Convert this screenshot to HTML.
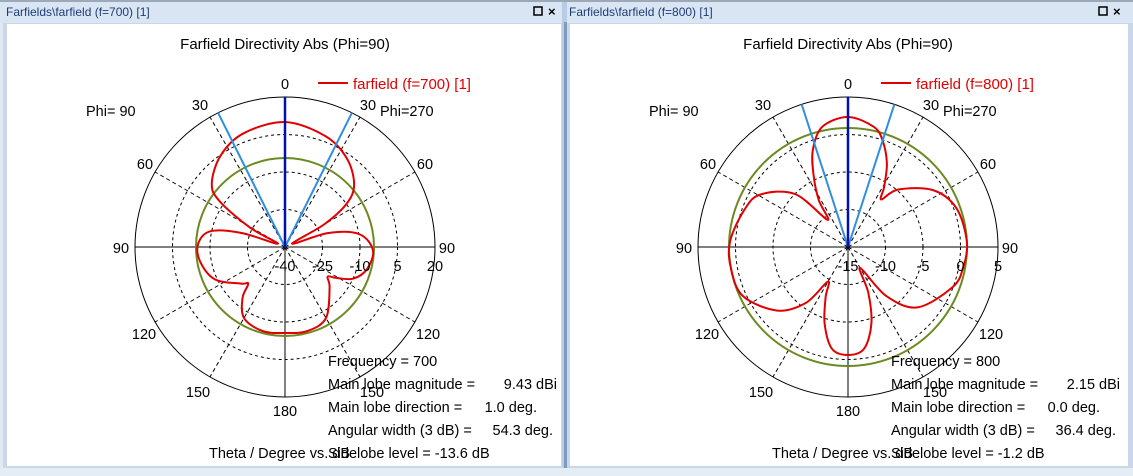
<!DOCTYPE html>
<html><head><meta charset="utf-8"><style>
html,body{margin:0;padding:0;background:#fff;}
svg{display:block;font-family:"Liberation Sans",sans-serif;}
</style></head><body>
<svg id="s" width="1133" height="476" viewBox="0 0 1133 476" xmlns="http://www.w3.org/2000/svg">
<rect x="0" y="0" width="1133" height="476" fill="#dfe8f3"/>
<rect x="0" y="0" width="1133" height="2" fill="#9aa8b8"/>
<rect x="0" y="2" width="564" height="21" fill="#d9e5f3"/>
<rect x="566" y="2" width="567" height="21" fill="#d9e5f3"/>
<rect x="562" y="2" width="5" height="474" fill="#b9cce3"/>
<rect x="564" y="22" width="3" height="446" fill="#7f9cc0"/>
<text x="6" y="16" font-size="12" fill="#1e3c78">Farfields\farfield (f=700) [1]</text>
<text x="569" y="16" font-size="12" fill="#1e3c78">Farfields\farfield (f=800) [1]</text>
<rect x="534" y="7" width="8" height="8" fill="none" stroke="#000" stroke-width="1.5"/>
<text x="548" y="16" font-size="13" font-weight="bold">×</text>
<rect x="1099" y="7" width="8" height="8" fill="none" stroke="#000" stroke-width="1.5"/>
<text x="1113" y="16" font-size="13" font-weight="bold">×</text>
<rect x="3" y="23" width="559" height="445" fill="#c9d7e8"/>
<rect x="7" y="24" width="554" height="442" fill="#fff"/>
<rect x="567" y="23" width="566" height="445" fill="#c9d7e8"/>
<rect x="570" y="24" width="558" height="442" fill="#fff"/>
<rect x="0" y="468" width="1133" height="8" fill="#e4ecf5"/>
<g id="p1"></g><g id="p2"></g>
</svg>
<script>
var NS="http://www.w3.org/2000/svg";
function el(p,n,a,t){var e=document.createElementNS(NS,n);for(var k in a)e.setAttribute(k,a[k]);if(t!==undefined)e.textContent=t;p.appendChild(e);return e;}
function pt(cx,cy,r,th){var a=th*Math.PI/180;return [cx+r*Math.sin(a),cy-r*Math.cos(a)];}
function panel(g,cx,cy,o){
  var R=150,FS=14.5;
  el(g,"text",{x:cx,y:49,"font-size":15,"text-anchor":"middle"},o.title);
  [37.5,75,112.5].forEach(function(r){el(g,"circle",{cx:cx,cy:cy,r:r,fill:"none",stroke:"#000","stroke-width":1,"stroke-dasharray":"3,3"});});
  el(g,"circle",{cx:cx,cy:cy,r:R,fill:"none",stroke:"#000","stroke-width":1});
  [30,60,120,150,210,240,300,330].forEach(function(t){var p=pt(cx,cy,R,t);el(g,"line",{x1:cx,y1:cy,x2:p[0],y2:p[1],stroke:"#000","stroke-dasharray":"4,3"});});
  el(g,"line",{x1:cx-R,y1:cy,x2:cx+R,y2:cy,stroke:"#000"});
  el(g,"line",{x1:cx,y1:cy-R,x2:cx,y2:cy+R,stroke:"#000"});
  el(g,"circle",{cx:cx,cy:cy,r:o.green,fill:"none",stroke:"#6b8a20","stroke-width":2});
  // catmull-rom in cartesian on table points
  var t=o.tab.slice(0,-1),P=t.map(function(q){return pt(cx,cy,q[1],q[0]);}),n=P.length,d="";
  for(var i=0;i<n;i++){var p0=P[(i-1+n)%n],p1=P[i],p2=P[(i+1)%n],p3=P[(i+2)%n];
    if(i==0)d="M"+p1[0].toFixed(1)+","+p1[1].toFixed(1);
    var c1=[p1[0]+(p2[0]-p0[0])/6,p1[1]+(p2[1]-p0[1])/6],c2=[p2[0]-(p3[0]-p1[0])/6,p2[1]-(p3[1]-p1[1])/6];
    d+="C"+c1[0].toFixed(1)+","+c1[1].toFixed(1)+" "+c2[0].toFixed(1)+","+c2[1].toFixed(1)+" "+p2[0].toFixed(1)+","+p2[1].toFixed(1);}
  el(g,"path",{d:d+"Z",fill:"none",stroke:"#e00000","stroke-width":2});
  [o.bw,-o.bw].forEach(function(b){var p=pt(cx,cy,R,b);el(g,"line",{x1:cx,y1:cy,x2:p[0],y2:p[1],stroke:"#2f8ee0","stroke-width":2});});
  el(g,"line",{x1:cx,y1:cy,x2:cx,y2:cy-R,stroke:"#0010b0","stroke-width":2.5});
  var L=[["0",0,89],["30",-85,110],["30",83,110],["60",-140,169],["60",140,169],["90",-164,253],["90",162,253],["120",-141,339],["120",143,339],["150",-87,397],["150",87,397],["180",0,416]];
  L.forEach(function(l){el(g,"text",{x:cx+l[1],y:l[2],"font-size":FS,"text-anchor":"middle"},l[0]);});
  o.rl.forEach(function(s,i){el(g,"text",{x:cx+i*37.5,y:271,"font-size":FS,"text-anchor":"middle"},s);});
  el(g,"text",{x:cx-199,y:116,"font-size":FS},"Phi= 90");
  el(g,"text",{x:cx+95,y:116,"font-size":FS},"Phi=270");
  el(g,"line",{x1:cx+33,y1:83,x2:cx+63,y2:83,stroke:"#e00000","stroke-width":2});
  el(g,"text",{x:cx+68,y:89,"font-size":15,fill:"#e00000"},o.leg);
  var x=cx+43;
  el(g,"text",{x:x,y:366,"font-size":FS},o.freq);
  var rows=[["Main lobe magnitude =",o.v[0],389,272],["Main lobe direction =",o.v[1],412,252],["Angular width (3 dB) =",o.v[2],435,268]];
  rows.forEach(function(r){el(g,"text",{x:x,y:r[2],"font-size":FS},r[0]);el(g,"text",{x:cx+r[3],y:r[2],"font-size":FS,"text-anchor":"end"},r[1]);});
  el(g,"text",{x:cx-76,y:458,"font-size":FS},"Theta / Degree vs. dB");
  el(g,"text",{x:x,y:458,"font-size":FS},o.sl);
}
panel(document.getElementById("p1"),285,247,{title:"Farfield Directivity Abs (Phi=90)",green:89,bw:26.5,
 rl:["-40","-25","-10","5","20"],leg:"farfield (f=700) [1]",freq:"Frequency = 700",
 v:["9.43 dBi","1.0 deg.","54.3 deg."],sl:"Sidelobe level =  -13.6 dB",
 tab:[[0,125],[20,118],[35,108],[48,93],[55,75],[60,45],[66,8],[72,45],[80,75],[92,88],[105,85],[115,75],[121,60],[125,52],[132,60],[150,82],[165,87],[180,86],[195,87],[210,82],[220,66],[225,52],[230,57],[245,77],[260,86],[272,87],[282,76],[288,45],[294,8],[299,40],[305,80],[311,97],[325,112],[340,121],[360,125]]});
panel(document.getElementById("p2"),848,247,{title:"Farfield Directivity Abs (Phi=90)",green:119,bw:18,
 rl:["-15","-10","-5","0","5"],leg:"farfield (f=800) [1]",freq:"Frequency = 800",
 v:["2.15 dBi","0.0 deg.","36.4 deg."],sl:"Sidelobe level =  -1.2 dB",
 tab:[[0,130],[12,123],[18,112],[25,92],[31,70],[35,58],[41,76],[56,102],[70,115],[87,119],[100,117],[111,112],[131,92],[142,62],[150,24],[156,50],[163,80],[171,103],[180,108],[189,103],[197,80],[204,55],[210,40],[217,70],[228,95],[245,116],[260,119],[273,118],[290,110],[301,102],[315,75],[323,34],[328,55],[334,78],[340,103],[348,123],[360,130]]});
</script>
</body></html>
